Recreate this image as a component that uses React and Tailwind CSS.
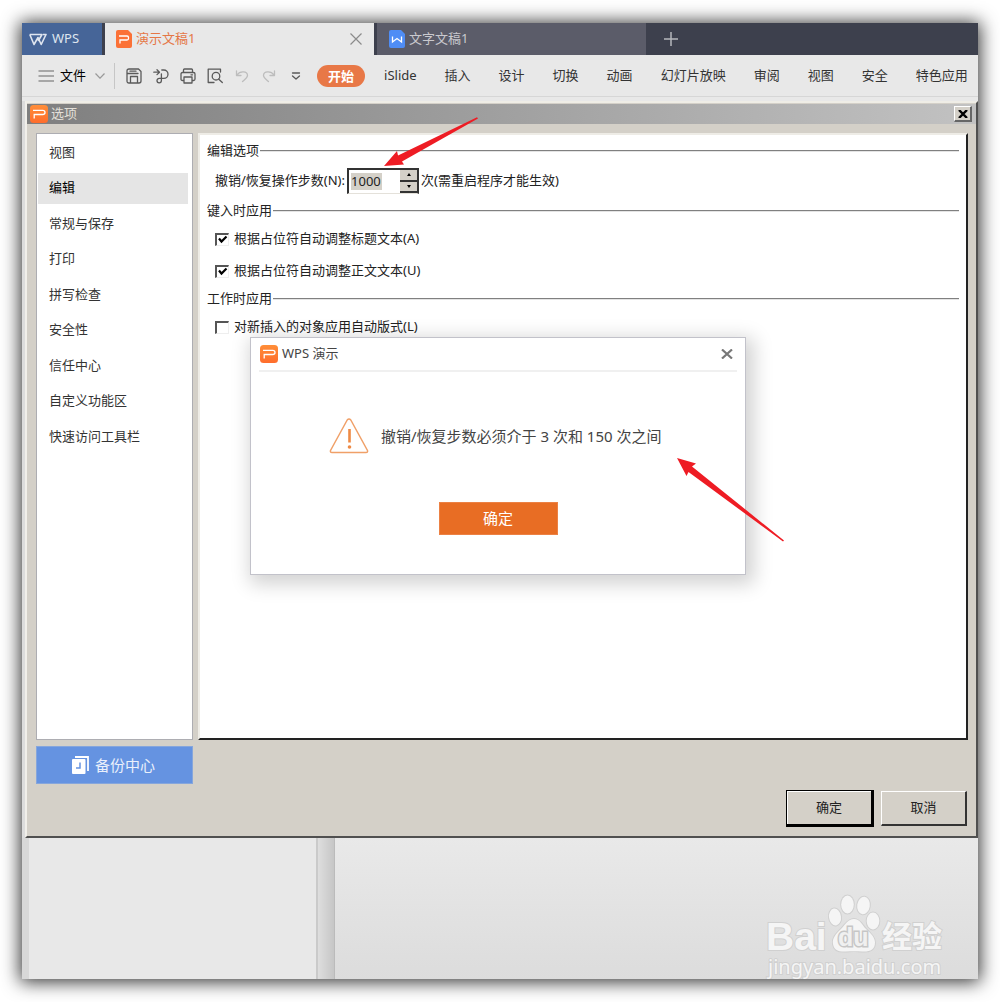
import React, { useState } from 'react'

const menuItems = ['iSlide', '插入', '设计', '切换', '动画', '幻灯片放映', '审阅', '视图', '安全', '特色应用']
const sections = ['视图', '编辑', '常规与保存', '打印', '拼写检查', '安全性', '信任中心', '自定义功能区', '快速访问工具栏']

const PresentationLogo = ({ className }) => (
  <svg viewBox="0 0 18 18" className={className} aria-hidden="true">
    <defs>
      <linearGradient id="orange" x1="0" y1="0" x2="0" y2="1">
        <stop offset="0" stopColor="#ff8e38" />
        <stop offset="1" stopColor="#ff6d2c" />
      </linearGradient>
    </defs>
    <rect width="18" height="18" rx="3.5" fill="url(#orange)" />
    <path d="M3 5.3h9.700q2.300 0 2.300 2.100t-2.300 2.100H4.200v4" fill="none" stroke="#fff" strokeWidth="1.300" />
  </svg>
)

const TabBar = () => (
  <div className="flex h-8 bg-[#3d404d] text-[13px]">
    <button className="flex w-20 items-center gap-[5px] bg-[#466598] pl-[7px] text-[#dfe5ef]">
      <svg viewBox="0 0 18 13" className="h-[13px] w-[18px]" fill="none" stroke="currentColor" strokeWidth="1.6" strokeLinejoin="round">
        <path d="M.8 1.500h12.200L9.200 8M.8 1.500l4.200 10L9 4.500l3.200 7L17 1.500h-3" />
      </svg>
      WPS
    </button>
    <div className="ml-[3px] flex w-[269px] items-center bg-[#e8e8e8] pr-3 pl-[11px] text-[#e57746]">
      <svg viewBox="0 0 16 18" className="mr-1 h-[18px] w-4">
        <path d="M2 0h10l4 4v12q0 2-2 2H2q-2 0-2-2V2q0-2 2-2z" fill="#fb7136" />
        <path d="M3 6h8q1.500 0 1.500 1.500v1q0 1.500-1.500 1.500H4v3.500" fill="none" stroke="#fff" strokeWidth="1.300" />
      </svg>
      演示文稿1
      <button aria-label="关闭" className="ml-auto text-[#8b8b8b]">
        <svg viewBox="0 0 12 12" className="h-3 w-3" stroke="currentColor" strokeWidth="1.2">
          <path d="M.5.5l11 11M11.500.5l-11 11" />
        </svg>
      </button>
    </div>
    <div className="ml-[3px] flex w-[269px] items-center bg-[#5b5c69] pl-3 text-[#c9c9ce]">
      <svg viewBox="0 0 16 18" className="mr-1 h-[18px] w-4">
        <path d="M2 0h10l4 4v12q0 2-2 2H2q-2 0-2-2V2q0-2 2-2z" fill="#4f8df5" />
        <path d="M3.500 6.500v5.500L8 8.500l4.500 3.500V6.500" fill="none" stroke="#fff" strokeWidth="1.300" />
      </svg>
      文字文稿1
    </div>
    <button aria-label="新建" className="ml-[18px] text-[#b5b6bc]">
      <svg viewBox="0 0 14 14" className="h-[14px] w-[14px]" stroke="currentColor" strokeWidth="1.500">
        <path d="M7 0v14M0 7h14" />
      </svg>
    </button>
  </div>
)

const QuickIcon = ({ label, muted, children }) => (
  <button aria-label={label} className={muted ? 'text-[#bdbdbd]' : 'text-[#5a5a5a]'}>
    <svg viewBox="0 0 16 16" className="h-4 w-4" fill="none" stroke="currentColor" strokeWidth="1.3" strokeLinecap="round" strokeLinejoin="round">
      {children}
    </svg>
  </button>
)

const Toolbar = () => (
  <div className="flex h-[42px] items-center border-b border-[#d6d6d6] bg-[#e8e8e8] pl-4 text-[13px] whitespace-nowrap text-[#333]">
    <button className="flex items-center text-black">
      <svg viewBox="0 0 16 12" className="mr-[6px] h-3 w-4" stroke="#666" strokeWidth="1.200">
        <path d="M.5 1h15.500M.5 6h15.500M.5 11h15.500" />
      </svg>
      文件
      <svg viewBox="0 0 10 6" className="ml-[9px] h-[6px] w-[10px]" fill="none" stroke="#999" strokeWidth="1.200">
        <path d="M.5.5L5 5.200 9.500.5" />
      </svg>
    </button>
    <div className="mr-[11px] ml-[9px] h-[26px] w-px bg-[#c6c6c6]" />
    <div className="flex items-center gap-[11px]">
      <QuickIcon label="保存">
        <path d="M3 1h9.500L15 3.500V13q0 2-2 2H3q-2 0-2-2V3q0-2 2-2zM1.500 5.500H4h8M4 3.200h6M4.500 15V8.500h7V15" />
      </QuickIcon>
      <QuickIcon label="输出">
        <path d="M.8 4.200h5.500M4 1.800l2.500 2.400L4 6.600M8.800 2h2a4.200 4.200 0 0 1 0 8.400H6.200a2.200 2.200 0 1 0 2.200 2.200V5.800" />
      </QuickIcon>
      <QuickIcon label="打印">
        <path d="M3.500 4.500V2q0-1 1-1h7q1 0 1 1v2.500M4 12.500H2.500Q1 12.500 1 11V6q0-1.500 1.500-1.500h11Q15 4.500 15 6v5q0 1.500-1.500 1.500H12M4 9h8v6H4zM11 6.800h1.500" />
      </QuickIcon>
      <QuickIcon label="打印预览">
        <path d="M7 14.500H1.200V1.200h12.300V4M11.800 11.200L15.300 14.500" />
        <circle cx="9" cy="8.200" r="3.800" />
      </QuickIcon>
      <QuickIcon label="撤销" muted>
        <path d="M2.500 3v4.500H7M3 7C6 2.500 13.500 3 13.500 7.500c0 2.500-3 4-5 6" />
      </QuickIcon>
      <QuickIcon label="恢复" muted>
        <path d="M13.500 3v4.500H9M13 7C10 2.500 2.500 3 2.500 7.500c0 2.500 3 4 5 6" />
      </QuickIcon>
      <QuickIcon label="更多">
        <path d="M4.500 5h7M4.500 8L8 11l3.500-3" />
      </QuickIcon>
    </div>
    <button className="ml-[13px] h-[22px] rounded-full bg-[#e87847] px-[11px] leading-[22px] font-bold text-white">开始</button>
    <nav className="ml-[19px] flex gap-7">
      {menuItems.map((item) => (
        <button key={item}>{item}</button>
      ))}
    </nav>
  </div>
)

const GroupTitle = ({ children }) => (
  <h3 className="flex h-[22px] items-center gap-px">
    {children}
    <span className="h-[2px] flex-1 border-t border-[#808080] bg-[#e4e4e4]" />
  </h3>
)

const CheckRow = ({ label, defaultChecked }) => (
  <label className="ml-2 flex h-[22px] items-center gap-[5px]">
    <span className="grid">
      <input
        type="checkbox"
        defaultChecked={defaultChecked}
        className="peer col-start-1 row-start-1 h-[13px] w-[14px] appearance-none border-t-2 border-l-2 border-r border-b border-t-[#555] border-r-[#eee] border-b-[#eee] border-l-[#555] bg-white"
      />
      <svg viewBox="0 0 14 13" className="pointer-events-none invisible col-start-1 row-start-1 h-[13px] w-[14px] peer-checked:visible" fill="none" stroke="#000" strokeWidth="2.200">
        <path d="M4 5.500l2.500 3L11.500 3.500" />
      </svg>
    </span>
    {label}
  </label>
)

const StepInput = () => {
  const [steps, setSteps] = useState('1000')
  const change = (n) => setSteps(String((Number(steps) || 0) + n))

  return (
    <span className="flex h-[26px] w-[72px] border-t-2 border-r-2 border-b border-l-2 border-t-[#333] border-r-[#333] border-b-[#e4e1da] border-l-[#333] bg-white">
      <input
        id="steps"
        value={steps}
        onChange={(e) => setSteps(e.target.value)}
        className="my-[3px] ml-[2px] w-[31px] bg-[#d4d0c8] outline-none"
      />
      <span className="ml-auto flex w-[17px] flex-col">
        <button aria-label="增加" onClick={() => change(1)} className="flex flex-1 items-center justify-center border-b-2 border-[#333] bg-[#d4d0c8]">
          <svg viewBox="0 0 4 3" className="h-[3px] w-1"><path d="M2 0l2 3H0z" /></svg>
        </button>
        <button aria-label="减少" onClick={() => change(-1)} className="flex flex-1 items-center justify-center border-b-2 border-[#333] bg-[#d4d0c8]">
          <svg viewBox="0 0 4 3" className="h-[3px] w-1"><path d="M0 0h4L2 3z" /></svg>
        </button>
      </span>
    </span>
  )
}

const MessageBox = () => (
  <div className="absolute top-[234px] left-[223px] flex h-[238px] w-[496px] flex-col border border-[#c2c2ca] bg-white px-2 text-[#444] shadow-[4px_5px_18px_4px_rgba(0,0,0,0.18)]">
    <div className="flex h-[34px] items-center border-b-2 border-[#f0f0f0] pr-[4px] text-[13px]">
      <PresentationLogo className="mr-1 ml-px h-[18px] w-[18px]" />
      WPS 演示
      <button aria-label="关闭" className="ml-auto text-[#777]">
        <svg viewBox="0 0 12 10" className="h-[10px] w-3" stroke="currentColor" strokeWidth="2.200">
          <path d="M1 .5l10 9M11 .5l-10 9" />
        </svg>
      </button>
    </div>
    <div className="mt-[46px] flex items-center gap-3 pl-[70px] text-[15px]">
      <svg viewBox="0 0 40 36" className="h-9 w-10" fill="none" stroke="#f0a068" strokeWidth="1.500" strokeLinejoin="round">
        <path d="M18.200 2Q20 0 21.800 2L38.500 32.500Q39 34.500 37 34.500H3Q1 34.500 1.500 32.500z" />
        <path d="M20.500 11v13.500" stroke="#ee8a45" strokeWidth="2.600" />
        <circle cx="20.500" cy="29" r="1.800" fill="#ee8a45" stroke="none" />
      </svg>
      <p>撤销/恢复步数必须介于 3 次和 150 次之间</p>
    </div>
    <button className="mx-auto mt-12 h-[33px] w-[119px] border border-[#ec8144] bg-[#e86d24] text-[15px] text-white">确定</button>
  </div>
)

const OptionsDialog = () => {
  const [active, setActive] = useState('编辑')

  return (
    <div className="relative ml-[3px] flex flex-1 flex-col border-2 border-t-[#efede6] border-r-[#505050] border-b-[#505050] border-l-[#f1efea] bg-[#d4d0c8] text-[13px] text-[#222]">
      <div className="mt-px flex h-5 items-center bg-linear-to-r from-[#7f7f7f] to-[#c2c2c2] pr-[4px] text-[#e4e0d9]">
        <PresentationLogo className="mr-[3px] ml-[3px] h-[18px] w-[18px]" />
        选项
        <button aria-label="关闭" className="ml-auto flex h-4 w-[18px] items-center justify-center border-t border-r-2 border-b-2 border-l border-t-white border-r-[#666] border-b-[#666] border-l-white bg-[#d4d0c8]">
          <svg viewBox="0 0 10 8" className="h-2 w-[10px]" stroke="#000" strokeWidth="2.400">
            <path d="M1 0l8 8M9 0L1 8" />
          </svg>
        </button>
      </div>

      <div className="mt-[9px] flex flex-1 gap-[5px] pr-[8px] pl-[9px]">
        <div className="w-[157px] border border-[#adadb2] bg-white">
          <div className="flex h-[318px] flex-col justify-between pt-[3px] pr-1 pl-px">
            {sections.map((name) => (
              <button
                key={name}
                onClick={() => setActive(name)}
                className={`h-[31px] pl-[11px] text-left ${active === name ? 'bg-[#e5e5e5] text-black' : 'text-[#333]'}`}
              >
                {name}
              </button>
            ))}
          </div>
        </div>

        <div className="flex flex-1 flex-col gap-[6px] border-2 border-t-[#eeece6] border-r-[#222] border-b-[#222] border-l-[#eeece6] bg-white pt-[5px] pr-[7px] pl-[7px]">
          <GroupTitle>编辑选项</GroupTitle>
          <div className="ml-2 flex h-[26px] items-center gap-[2px]">
            <label htmlFor="steps">撤销/恢复操作步数(N):</label>
            <StepInput />
            <span>次(需重启程序才能生效)</span>
          </div>
          <GroupTitle>键入时应用</GroupTitle>
          <div className="flex flex-col gap-[10px]">
            <CheckRow label="根据占位符自动调整标题文本(A)" defaultChecked />
            <CheckRow label="根据占位符自动调整正文文本(U)" defaultChecked />
          </div>
          <GroupTitle>工作时应用</GroupTitle>
          <CheckRow label="对新插入的对象应用自动版式(L)" />
        </div>
      </div>

      <button className="mt-[6px] ml-[9px] flex h-[38px] w-[157px] items-center justify-center gap-[6px] border border-[#86a6dc] bg-[#6593e1] pr-[2px] text-[15px] text-[#eaf0fb]">
        <svg viewBox="0 0 17 18" className="h-[18px] w-[17px]">
          <path d="M3 1h13v14" fill="none" stroke="#fff" strokeWidth="1.800" />
          <rect y="3" width="13.500" height="15" rx="1" fill="#fff" />
          <path d="M8 6.500v5.500H4" fill="none" stroke="#6593e1" strokeWidth="1.500" />
        </svg>
        备份中心
      </button>
      <div className="mt-[6px] mb-[9px] flex items-center justify-end gap-[7px] pr-[9px]">
        <button className="h-[37px] w-[88px] border-t border-r-3 border-b-3 border-l border-black bg-[#d4d0c8] shadow-[inset_1px_1px_0_#fff]">确定</button>
        <button className="h-[35px] w-[86px] border-t border-r-2 border-b-2 border-l border-t-white border-r-[#333] border-b-[#333] border-l-white bg-[#d4d0c8]">取消</button>
      </div>

      <MessageBox />
    </div>
  )
}

const Watermark = () => (
  <svg viewBox="0 0 190 90" className="absolute right-[24px] bottom-0 h-[90px] w-[190px]" fill="#f5f5f5" stroke="#d0d0d0" strokeWidth="2" paintOrder="stroke" aria-hidden="true">
    <text x="2" y="61" fontSize="39" fontWeight="700" fontFamily="Liberation Sans, sans-serif">Bai</text>
    <ellipse cx="71" cy="28" rx="6" ry="8.500" transform="rotate(-8 71 28)" />
    <ellipse cx="83.500" cy="15.500" rx="6.300" ry="9" />
    <ellipse cx="99.500" cy="16.500" rx="6.300" ry="8.800" transform="rotate(8 99.500 16.500)" />
    <ellipse cx="109" cy="32" rx="6.300" ry="8.500" />
    <path d="M90 30c-6 0-9 6-13 10-5 5-9 9-8 15 1 7 7 8 13 7.500 5-.5 11-.5 16 0 8 .5 13-2 13-9 0-5-4-9-9-13.500-4-4-6-10-12-10z" />
    <text x="74" y="57" fontSize="25" fontWeight="700" fontFamily="Liberation Sans, sans-serif" fill="#f0f0f0" stroke="#c6c6c6" strokeWidth="3">du</text>
    <text x="118" y="58" fontSize="30" fontWeight="700" fontFamily="Noto Sans CJK SC, sans-serif">经验</text>
    <text x="4" y="85" fontSize="20" fontFamily="Noto Sans, sans-serif">jingyan.baidu.com</text>
  </svg>
)

const App = () => {
  return (
    <div className="min-h-screen flex bg-white px-[22px] py-[23px] font-['Noto_Sans','Noto_Sans_CJK_SC',sans-serif]">
      <div className="relative flex flex-1 flex-col bg-[#e8e8e8] shadow-[0_1px_17px_2px_rgba(0,0,0,0.8)]">
        <TabBar />
        <Toolbar />
        <div className="flex flex-1 flex-col bg-[#dcdcdc]">
          <div className="h-1 bg-[#e8e8e8]" />
          <OptionsDialog />
        </div>

        {/* Slide list and canvas under the dialog */}
        <div className="relative flex h-[141px]">
          <div className="w-[7px] bg-[#d8d8d8]" />
          <div className="w-[289px] border-r-2 border-[#cacaca] bg-[#e8e8e8]" />
          <div className="w-[17px] border-r border-[#bbb] bg-linear-to-r from-[#dedede] to-[#c6c6c6]" />
          <div className="flex-1 bg-linear-to-b from-[#e9e9e9] to-[#dcdcdc]" />
          <Watermark />
        </div>

        {/* Pointer arrows */}
        <svg viewBox="0 0 96 50" className="pointer-events-none absolute top-[94px] left-[361px] h-[50px] w-24" fill="#ee1c24">
          <path d="M1 49L14 34 15 38.500 94 .3 95 1.500 19 44.500 21 47.500z" />
        </svg>
        <svg viewBox="0 0 110 86" className="pointer-events-none absolute top-[434px] left-[654px] h-[86px] w-[110px]" fill="#ee1c24">
          <path d="M1 1L20 6.500 16 9.500 108 83.500 107 84.500 12.500 15 10.500 19z" />
        </svg>
      </div>
    </div>
  )
}

export default App
